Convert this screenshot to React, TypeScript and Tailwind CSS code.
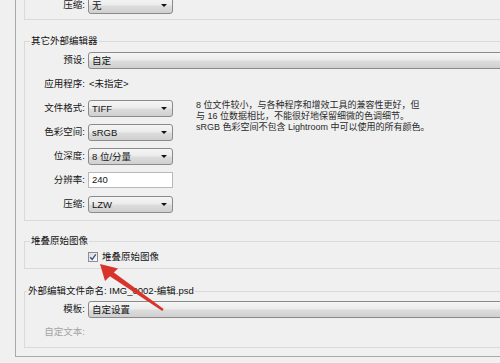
import type { ReactNode } from 'react'

function Select({ value, className }: { value: string; className: string }) {
  return (
    <div
      className={`flex h-[17px] items-center justify-between rounded-[3px] border border-[#8a8a8a] bg-[linear-gradient(#f5f5f5,#ececec_45%,#dcdcdc_55%,#d0d0d0)] pl-[3px] pr-[5px] ${className}`}
    >
      <span className="leading-[15px]">{value}</span>
      <span className="h-0 w-0 border-x-[3px] border-t-[3px] border-x-transparent border-t-[#111]" />
    </div>
  )
}

function Row({ label, children, h = 'h-[24px]', muted = false }: { label: string; children?: ReactNode; h?: string; muted?: boolean }) {
  return (
    <div className={`flex items-center ${h}`}>
      <span className={`w-[60px] shrink-0 text-right ${muted ? 'text-[#a3a3a3]' : ''}`}>{label}</span>
      <div className="ml-[3px] flex items-center">{children}</div>
    </div>
  )
}

function Group({ title, offset = 'ml-[5px]', className = '', children }: { title: string; offset?: string; className?: string; children: ReactNode }) {
  return (
    <fieldset className={`w-[640px] border border-[#dadada] ${className}`}>
      <legend className={`${offset} px-[1px] leading-[14px] text-[#111]`}>{title}</legend>
      {children}
    </fieldset>
  )
}

function App() {
  return (
    <div className="relative h-[363px] w-[500px] overflow-hidden bg-[#f0f0f0] pl-[15px] font-['Liberation_Sans','Noto_Sans_CJK_SC',sans-serif] text-[9.5px] text-[#141414]">
      <div className="mt-[-20px] h-[377px] border-b border-l border-[#a9a9a9] pl-[8px]">
        {/* previous group, cut off at the top */}
        <div className="h-[40px] w-[640px] border-b border-l border-[#dadada] pt-[17px]">
          <Row label="压缩:" h="h-[17px]">
            <Select value="无" className="w-[85px]" />
          </Row>
        </div>

        <Group title="其它外部编辑器" className="mt-[14px] pb-[4px]">
          <Row label="预设:">
            <Select value="自定" className="w-[700px]" />
          </Row>
          <Row label="应用程序:">
            <span className="pl-[1px]">&lt;未指定&gt;</span>
          </Row>
          <div className="flex">
            <div>
              <Row label="文件格式:">
                <Select value="TIFF" className="w-[85px]" />
              </Row>
              <Row label="色彩空间:">
                <Select value="sRGB" className="w-[85px]" />
              </Row>
              <Row label="位深度:">
                <Select value="8 位/分量" className="w-[85px]" />
              </Row>
              <Row label="分辨率:">
                <div className="flex h-[16px] w-[85px] items-center border border-[#b5b8bd] bg-white pl-[3px]">240</div>
              </Row>
              <Row label="压缩:">
                <Select value="LZW" className="w-[85px]" />
              </Row>
            </div>
            <div className="ml-[23px] pt-[4px] text-[9px] leading-[11px] text-[#2a2a2a]">
              <p>8 位文件较小，与各种程序和增效工具的兼容性更好，但</p>
              <p>与 16 位数据相比，不能很好地保留细微的色调细节。</p>
              <p>sRGB 色彩空间不包含 Lightroom 中可以使用的所有颜色。</p>
            </div>
          </div>
        </Group>

        <Group title="堆叠原始图像" className="mt-[13px] pb-[2px]">
          <div className="flex h-[18px] items-center pl-[63px]">
            <span className="flex h-[10px] w-[10px] items-center justify-center border border-[#8e8f8f] bg-[linear-gradient(135deg,#dcdcdc,#fbfbfb)]">
              <svg width="8" height="8" viewBox="0 0 8 8">
                <path d="M1.2 4.2 L3.2 6.3 L6.8 1.4" fill="none" stroke="#3d5487" strokeWidth="1.4" />
              </svg>
            </span>
            <span className="ml-[4px]">堆叠原始图像</span>
          </div>
        </Group>

        <Group title="外部编辑文件命名: IMG_0002-编辑.psd" offset="ml-[2px]" className="mt-[15px] pb-[3px]">
          <Row label="模板:" h="h-[22px]">
            <Select value="自定设置" className="w-[700px]" />
          </Row>
          <Row label="自定文本:" muted />
        </Group>
      </div>

      {/* red annotation arrow */}
      <svg className="pointer-events-none absolute left-0 top-0" width="500" height="363">
        <polygon points="100,264 118,268.5 105,281" fill="#d9342b" />
        <polygon points="109.5,276 112.5,271.6 163.7,309.1 162.3,310.9" fill="#d9342b" />
      </svg>
    </div>
  )
}

export default App
